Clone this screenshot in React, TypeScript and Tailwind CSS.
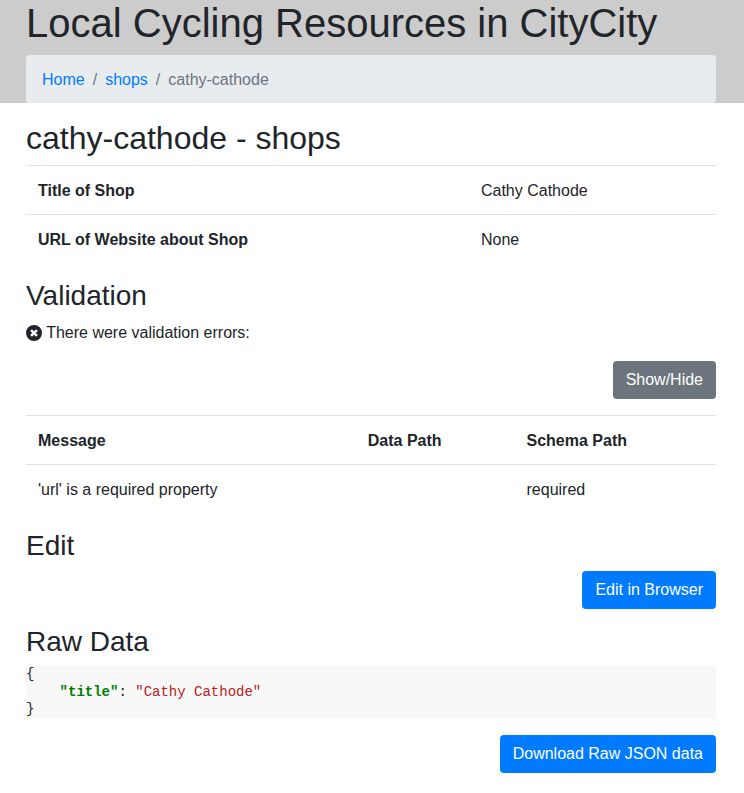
import React from "react";

const buttonBase = "rounded px-[13px] py-[7px] text-base leading-6 text-white";
const cell = "px-3 pt-[13px] pb-[11px]";
const headCell = "px-3 pt-[13px] pb-[11px] text-left font-bold";
const sectionTitle = "mb-2 text-[28px] leading-[1.2]";

function Breadcrumb() {
  return (
    <nav aria-label="breadcrumb">
      <ol className="flex rounded bg-[#e9ecef] px-4 pt-[13px] pb-[11px]">
        <li><a href="#home" className="text-[#007bff]">Home</a></li>
        <li className="flex gap-2 pl-2 text-[#6c757d]">
          <span>/</span>
          <a href="#shops" className="text-[#007bff]">shops</a>
        </li>
        <li className="flex gap-2 pl-2 text-[#6c757d]">
          <span>/</span>
          <span>cathy-cathode</span>
        </li>
      </ol>
    </nav>
  );
}

function ErrorIcon() {
  return (
    <svg viewBox="0 0 16 16" className="inline h-4 w-4 align-[-3px]" fill="currentColor" aria-hidden="true">
      <path
        fillRule="evenodd"
        d="M8 0a8 8 0 1 0 0 16A8 8 0 0 0 8 0zM5.900 4.200L8 6.200L10.100 4.200L11.800 5.900L9.800 8L11.800 10.100L10.100 11.800L8 9.800L5.900 11.800L4.200 10.100L6.200 8L4.200 5.900z"
      />
    </svg>
  );
}

export default function App() {
  return (
    <div className="bg-white font-['Liberation_Sans',Arial,sans-serif] text-base leading-6 text-[#212529]">
      <header className="bg-[#cccccc] pr-7 pl-[26px]">
        <h1 className="pb-2 text-[40px] leading-[47px]">Local Cycling Resources in CityCity</h1>
        <Breadcrumb />
      </header>
      <main className="pt-4 pr-7 pl-[26px]">
        <h2 className="mb-2 text-[32px] leading-[1.2]">cathy-cathode - shops</h2>
        <table className="mb-4 w-full border-collapse">
          <tbody>
            <tr className="border-t border-[#dee2e6]">
              <th scope="row" className={headCell + " w-[64.2%]"}>Title of Shop</th>
              <td className={cell}>Cathy Cathode</td>
            </tr>
            <tr className="border-t border-[#dee2e6]">
              <th scope="row" className={headCell}>URL of Website about Shop</th>
              <td className={cell}>None</td>
            </tr>
          </tbody>
        </table>

        <h3 className={sectionTitle}>Validation</h3>
        <p className="mb-4">
          <ErrorIcon /> There were validation errors:
        </p>
        <div className="mb-4 flex justify-end">
          <button type="button" className={buttonBase + " bg-[#6c757d]"}>Show/Hide</button>
        </div>
        <table className="mb-4 w-full border-collapse">
          <thead>
            <tr className="border-t border-[#dee2e6]">
              <th scope="col" className={headCell + " w-[47.8%]"}>Message</th>
              <th scope="col" className={headCell + " w-[23%]"}>Data Path</th>
              <th scope="col" className={headCell}>Schema Path</th>
            </tr>
          </thead>
          <tbody>
            <tr className="border-t border-[#dee2e6]">
              <td className={cell}>'url' is a required property</td>
              <td className={cell}></td>
              <td className={cell}>required</td>
            </tr>
          </tbody>
        </table>

        <h3 className={sectionTitle}>Edit</h3>
        <div className="mb-4 flex justify-end">
          <button type="button" className={buttonBase + " bg-[#007bff]"}>Edit in Browser</button>
        </div>

        <h3 className={sectionTitle}>Raw Data</h3>
        <pre className="mb-4 bg-[#f8f8f8] font-['Liberation_Mono',monospace] text-sm leading-tight">
          {"{\n    "}
          <span className="font-bold text-[#008000]">"title"</span>
          {": "}
          <span className="text-[#ba2121]">"Cathy Cathode"</span>
          {"\n}"}
        </pre>
        <div className="flex justify-end pb-5">
          <button type="button" className={buttonBase + " bg-[#007bff]"}>Download Raw JSON data</button>
        </div>
      </main>
    </div>
  );
}
